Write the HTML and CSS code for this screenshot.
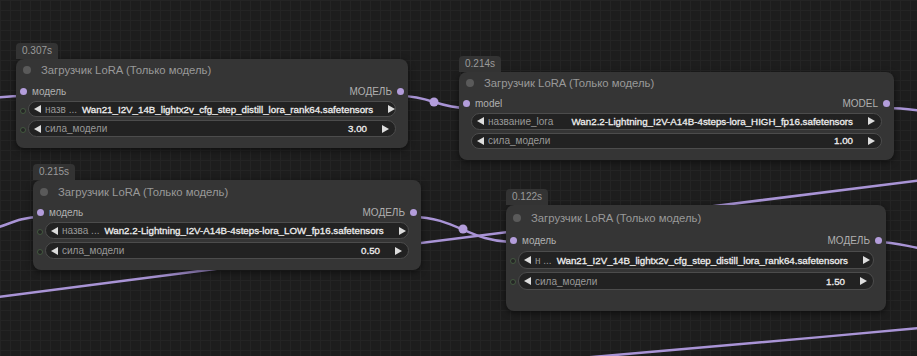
FILE: index.html
```html
<!DOCTYPE html>
<html lang="ru">
<head>
    <meta charset="UTF-8">
    <meta name="viewport" content="width=device-width, initial-scale=1.0">
    <title>LoRA nodes</title>
    <link rel="stylesheet" href="styles.css">
</head>
<body>
    <div class="canvas">
        <svg class="links" width="917" height="356" viewBox="0 0 917 356">
            <g class="wire">
                <path d="M-40 102 C-10 98, 5 96, 23 96"/>
                <path d="M401 96 C430 96, 438 108, 467 108"/>
                <path d="M887 108 C905 108, 912 110, 940 113"/>
                <path d="M-10 298 C300 258, 600 219, 930 179"/>
                <path d="M-20 232 C5 228, 15 217, 41 217"/>
                <path d="M413 217 C455 217, 470 242, 513 242"/>
                <path d="M878 242 C895 242, 905 246, 930 250"/>
                <path d="M535 362 C680 350, 800 339, 930 327"/>
            </g>
            <circle class="mid" cx="434" cy="102" r="4.5"/>
            <circle class="mid" cx="463" cy="229" r="4.5"/>
        </svg>

        <!-- node 1 -->
        <div class="node node-a">
            <div class="badge">0.307s</div>
            <div class="title"><span class="dot"></span>Загрузчик LoRA (Только модель)</div>
            <div class="slots">
                <span class="slot in">модель</span>
                <span class="slot out">МОДЕЛЬ</span>
            </div>
            <div class="widget">
                <span class="arrow left"></span>
                <span class="label">назв ...</span>
                <span class="value">Wan21_I2V_14B_lightx2v_cfg_step_distill_lora_rank64.safetensors</span>
                <span class="arrow right"></span>
            </div>
            <div class="widget">
                <span class="arrow left"></span>
                <span class="label">сила_модели</span>
                <span class="value">3.00</span>
                <span class="arrow right"></span>
            </div>
        </div>

        <!-- node 2 -->
        <div class="node node-b">
            <div class="badge">0.214s</div>
            <div class="title"><span class="dot"></span>Загрузчик LoRA (Только модель)</div>
            <div class="slots">
                <span class="slot in">model</span>
                <span class="slot out">MODEL</span>
            </div>
            <div class="widget plain">
                <span class="arrow left"></span>
                <span class="label">название_lora</span>
                <span class="value">Wan2.2-Lightning_I2V-A14B-4steps-lora_HIGH_fp16.safetensors</span>
                <span class="arrow right"></span>
            </div>
            <div class="widget plain">
                <span class="arrow left"></span>
                <span class="label">сила_модели</span>
                <span class="value">1.00</span>
                <span class="arrow right"></span>
            </div>
        </div>

        <!-- node 3 -->
        <div class="node node-c">
            <div class="badge">0.215s</div>
            <div class="title"><span class="dot"></span>Загрузчик LoRA (Только модель)</div>
            <div class="slots">
                <span class="slot in">модель</span>
                <span class="slot out">МОДЕЛЬ</span>
            </div>
            <div class="widget">
                <span class="arrow left"></span>
                <span class="label">назва ...</span>
                <span class="value">Wan2.2-Lightning_I2V-A14B-4steps-lora_LOW_fp16.safetensors</span>
                <span class="arrow right"></span>
            </div>
            <div class="widget">
                <span class="arrow left"></span>
                <span class="label">сила_модели</span>
                <span class="value">0.50</span>
                <span class="arrow right"></span>
            </div>
        </div>

        <!-- node 4 -->
        <div class="node node-d">
            <div class="badge">0.122s</div>
            <div class="title"><span class="dot"></span>Загрузчик LoRA (Только модель)</div>
            <div class="slots">
                <span class="slot in">модель</span>
                <span class="slot out">МОДЕЛЬ</span>
            </div>
            <div class="widget">
                <span class="arrow left"></span>
                <span class="label">н ...</span>
                <span class="value">Wan21_I2V_14B_lightx2v_cfg_step_distill_lora_rank64.safetensors</span>
                <span class="arrow right"></span>
            </div>
            <div class="widget">
                <span class="arrow left"></span>
                <span class="label">сила_модели</span>
                <span class="value">1.50</span>
                <span class="arrow right"></span>
            </div>
        </div>
    </div>
</body>
</html>
```

FILE: styles.css
```css
body {
    margin: 0;
    background-color: #1d1d1d;
    font-family: 'Liberation Sans', Arial, sans-serif;
}

.canvas {
    position: relative;
    width: 917px;
    height: 356px;
    overflow: hidden;
    background-color: #1d1d1d;
    background-image:
        linear-gradient(#242424 1px, transparent 1px),
        linear-gradient(90deg, #242424 1px, transparent 1px);
    background-size: 10px 10px;
}

.links {
    position: absolute;
    left: 0;
    top: 0;
}

.wire path {
    fill: none;
    stroke: #a994d6;
    stroke-width: 2.5;
}

.mid {
    fill: #b39ddb;
}

/* nodes sit on the canvas at their own spot */
.node {
    position: absolute;
    background-color: #353535;
    border-radius: 8px;
    box-shadow: 0 2px 6px rgba(0, 0, 0, 0.55);
    display: flex;
    flex-direction: column;
    padding-bottom: 8px;
    box-sizing: border-box;
}

.node-a { left: 16px; top: 59px; width: 392px; height: 89px; }
.node-b { left: 459px; top: 72px; width: 435px; height: 88px; }
.node-c { left: 33px; top: 180px; width: 388px; height: 90px; }
.node-d { left: 506px; top: 205px; width: 380px; height: 106px; }

.badge {
    position: absolute;
    left: 0;
    top: -16px;
    height: 16px;
    line-height: 16px;
    padding: 0 6px;
    font-size: 10px;
    color: #9a9a9a;
    background-color: #333;
    border-radius: 4px 4px 0 0;
}

.title {
    height: 25px;
    display: flex;
    align-items: center;
    gap: 10px;
    padding-left: 7px;
    font-size: 11.3px;
    color: #999;
}

.title .dot {
    width: 8px;
    height: 8px;
    border-radius: 50%;
    background-color: #5a5a5a;
}

.slots {
    height: 21px;
    display: flex;
    justify-content: space-between;
    align-items: center;
    font-size: 10px;
    color: #b0b0b0;
    padding: 0 4px;
}

.slot {
    display: flex;
    align-items: center;
    gap: 5px;
}

.slot.in::before,
.slot.out::after {
    content: "";
    width: 7px;
    height: 7px;
    border-radius: 50%;
    background-color: #b39ddb;
}

.widget {
    position: relative;
    height: 16px;
    margin: 0 12px 3px;
    display: flex;
    align-items: center;
    padding: 0 6px 0 5px;
    background-color: #222;
    border: 1px solid #4c4c4c;
    border-radius: 9px;
    font-size: 10px;
}

.widget::before {
    content: "";
    position: absolute;
    left: -9px;
    top: 6px;
    width: 4px;
    height: 4px;
    border-radius: 50%;
    border: 1px solid #43593f;
    background-color: #252525;
}

.widget.plain::before {
    display: none;
}

.arrow {
    flex-shrink: 0;
    width: 0;
    height: 0;
    border-top: 4.5px solid transparent;
    border-bottom: 4.5px solid transparent;
}

.arrow.left {
    border-right: 7px solid #ddd;
    margin-right: 4px;
}

.arrow.right {
    border-left: 7px solid #ddd;
}

.label {
    color: #999;
    margin-right: 5px;
    white-space: nowrap;
}

.value {
    margin-left: auto;
    margin-right: 15px;
    font-size: 9.75px;
    color: #eee;
    -webkit-text-stroke: 0.3px #eee;
    white-space: nowrap;
}
```
